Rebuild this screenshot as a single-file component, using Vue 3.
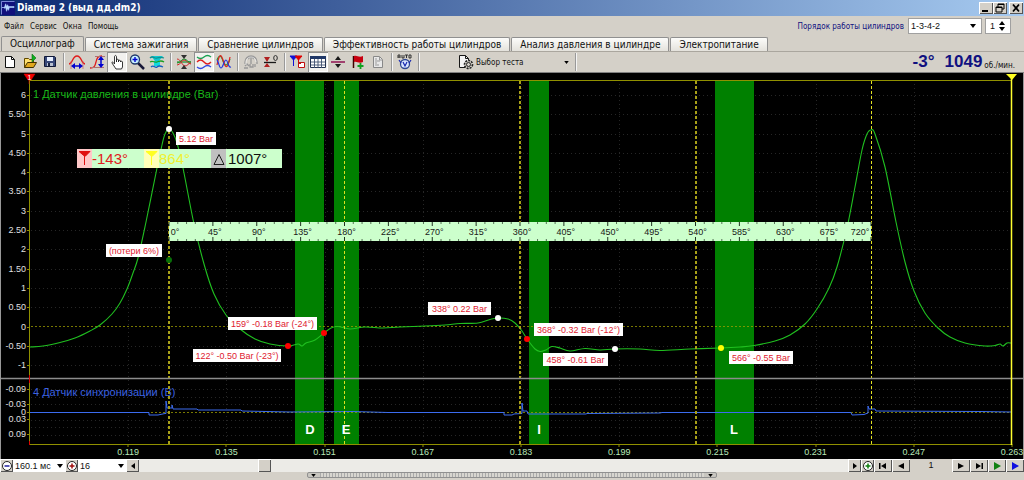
<script setup>
import { ref } from 'vue'

const menus = ['Файл', 'Сервис', 'Окна', 'Помощь']
const tabs = ['Осциллограф', 'Система зажигания', 'Сравнение цилиндров', 'Эффективность работы цилиндров', 'Анализ давления в цилиндре', 'Электропитание']
const activeTab = ref(0)
const order = ref('1-3-4-2')
const cylinder = ref(1)
const span = ref('160.1 мс')
const gain = ref('16')
const position = ref(171)

const X0 = 30
const STEP = 98.2
const times = ['0.119', '0.135', '0.151', '0.167', '0.183', '0.199', '0.215', '0.231', '0.247', '0.263']
const timeX = (i) => X0 + STEP * (i + 1)
const barY = (v) => 326.5 - 38.6 * v
const bars = ['6', '5.50', '5', '4.50', '4', '3.50', '3', '2.50', '2', '1.50', '1', '0.50', '0', '-0.50', '-1']
const volts = [['-0.09', 389], ['-0.03', 404], ['0', 412], ['0.03', 419], ['0.09', 434]]
const voltGrid = [389, 397, 404, 420, 427, 435]

const bands = [
  { x: 295, w: 29, t: 'D', tx: 310 },
  { x: 334, w: 25, t: 'E', tx: 346 },
  { x: 529, w: 20, t: 'I', tx: 539 },
  { x: 715, w: 39, t: 'L', tx: 734 }
]
const cycles = [
  { x: 169, thick: true },
  { x: 344, thick: false },
  { x: 520, thick: true },
  { x: 696, thick: true },
  { x: 871, thick: false }
]

const degX = (d) => 169 + d * 0.975
const ticks = Array.from({ length: 81 }, (_, i) => ({ x: degX(i * 9), big: i % 5 === 0 }))
const degrees = Array.from({ length: 17 }, (_, i) => i * 45)
const degLabelX = (d) => (d === 0 ? 175 : d === 720 ? 860 : degX(d) + 2)

const pressure = [
  [30, 347], [43, 346], [60, 342.5], [75, 338], [90, 331], [100, 325], [112, 314], [120, 303], [127, 289], [133, 273], [138, 258],
  [146, 222], [157, 168], [162, 145], [165, 134], [169, 129], [173, 133], [177, 143], [183, 168], [194, 224], [204, 264], [214, 294], [226, 315],
  [240, 329], [255, 339], [270, 344], [288, 346], [298, 344], [302, 346], [306, 343], [315, 340], [324, 333], [331, 328], [338, 326.5],
  [350, 329], [365, 327], [383, 328], [400, 327], [425, 326], [445, 325], [460, 323.5], [478, 323], [490, 319.5], [498, 318], [508, 319],
  [515, 323], [522, 331], [527, 339], [535, 349], [540, 351.5], [546, 350], [552, 346.5], [560, 348], [570, 351], [585, 348.5],
  [600, 350], [615, 349], [640, 349], [660, 350.5], [690, 349], [721, 348], [740, 347], [754, 345.5], [775, 341], [790, 335],
  [805, 324], [817, 309], [829, 288], [837, 267], [847, 228], [855, 187], [862, 150], [867, 134], [871, 130], [875, 134],
  [885, 167], [896, 222], [905, 262], [914, 291], [925, 313], [938, 328], [950, 337], [965, 343], [985, 346], [995, 345.5],
  [1000, 344], [1003, 346], [1007, 343], [1011, 343]
]
const sync = '30,412.5 149,412.5 149,415 158,415 165,413.5 166,413.5 166,401 167,408 172,408 172,405 173,409 197,409 198,410 241,410 242,411 290,412 352,411.5 388,412.5 504,412.5 504,415 512,415 514,414 522,413.5 522,403 523,411 527,411 528,414 586,414 587,413.5 660,413 662,412.5 851,412.5 852,415 864,414.5 868,413 868,406 869,409 875,409 876,411 980,411.5 1011,412'

function smooth(p) {
  let d = `M${p[0][0]} ${p[0][1]}`
  for (let i = 0; i < p.length - 1; i++) {
    const a = p[i - 1] || p[i]
    const b = p[i]
    const c = p[i + 1]
    const e = p[i + 2] || c
    const n = [b[0] + (c[0] - a[0]) / 6, b[1] + (c[1] - a[1]) / 6, c[0] - (e[0] - b[0]) / 6, c[1] - (e[1] - b[1]) / 6, c[0], c[1]]
    d += 'C' + n.map((v) => v.toFixed(1)).join(' ')
  }
  return d
}
const pressurePath = smooth(pressure)

const points = [
  { x: 169, y: 129, c: '#fff' },
  { x: 169, y: 260, c: '#087008' },
  { x: 288, y: 346, c: '#f00' },
  { x: 324, y: 333, c: '#f00' },
  { x: 498, y: 318, c: '#fff' },
  { x: 527, y: 339, c: '#f00' },
  { x: 615, y: 349, c: '#fff' },
  { x: 721, y: 348, c: '#ff0' }
]
const notes = [
  { x: 176, y: 132, w: 40, t: '5.12 Bar' },
  { x: 106, y: 244, w: 56, t: '(потери 6%)' },
  { x: 228, y: 317, w: 89, t: '159° -0.18 Bar (-24°)' },
  { x: 193, y: 349, w: 88, t: '122° -0.50 Bar (-23°)' },
  { x: 428, y: 302, w: 63, t: '338° 0.22 Bar' },
  { x: 534, y: 323, w: 89, t: '368° -0.32 Bar (-12°)' },
  { x: 543, y: 353, w: 65, t: '458° -0.61 Bar' },
  { x: 729, y: 351, w: 64, t: '566° -0.55 Bar' }
]

const groups = [
  ['new', 'open', 'save'],
  ['period', 'level', 'hand', 'zoom', 'fit'],
  ['cross', 'split', 'overlay'],
  ['auto', 'zero'],
  ['markers', 'table', 'divide', 'flag', 'notes'],
  ['autov']
]
const titles = {
  new: 'Новый', open: 'Открыть', save: 'Сохранить', period: 'Период', level: 'Уровень', hand: 'Рука', zoom: 'Масштаб', fit: 'Вписать',
  cross: 'Центр', split: 'Раздельно', overlay: 'Вместе', auto: 'Авто', zero: 'Ноль', markers: 'Маркеры', table: 'Таблица',
  divide: 'Разделитель', flag: 'Флаг', notes: 'Заметки', autov: 'Авто V'
}
const pressed = ['hand', 'split', 'table']
</script>

<template>
  <main class="app">
    <header class="titlebar">
      <svg class="logo" viewBox="0 0 15 15"><rect width="15" height="15" fill="#10107c" /><path d="M.5 14.500V.500h14" stroke="#8898e0" fill="none" /><path d="M1 7h2l1-1 1-3 1 3 1-2 1 2h6v1H9l-1 3-1-2-1 3-1-4-1 1-1-1H1z" fill="#b8d8ff" stroke="#b8d8ff" stroke-width=".6" /></svg>
      <h1>Diamag 2 (выд дд.dm2)</h1>
      <div class="winbtns">
        <button aria-label="Свернуть"><svg viewBox="0 0 14 12"><path d="M3 9h6" stroke="#000" stroke-width="2" /></svg></button>
        <button aria-label="Восстановить"><svg viewBox="0 0 14 12"><path d="M5 5V2h6v5H9M5 2.500h6M3 5h6v5H3zM3 5.500h6" stroke="#000" fill="none" /></svg></button>
        <button class="close" aria-label="Закрыть"><svg viewBox="0 0 14 12"><path d="M4 2.500l6 7M10 2.500l-6 7" stroke="#000" stroke-width="1.800" /></svg></button>
      </div>
    </header>

    <div class="menurow">
      <nav><button v-for="m in menus" :key="m">{{ m }}</button></nav>
      <label class="orderlabel" for="order">Порядок работы цилиндров</label>
      <div class="drop order">
        <select id="order" v-model="order"><option>1-3-4-2</option><option>1-2-4-3</option></select>
        <svg viewBox="0 0 6 4"><path d="M0 0h6L3 4z" /></svg>
      </div>
      <div class="spin">
        <input v-model="cylinder" type="text" aria-label="Цилиндр">
        <div>
          <button aria-label="Больше" @click="cylinder++"><svg viewBox="0 0 6 4"><path d="M0 4h6L3 0z" /></svg></button>
          <button aria-label="Меньше" @click="cylinder--"><svg viewBox="0 0 6 4"><path d="M0 0h6L3 4z" /></svg></button>
        </div>
      </div>
    </div>

    <div class="tabs" role="tablist">
      <button v-for="(t, i) in tabs" :key="t" role="tab" :aria-selected="i === activeTab" :class="{ on: i === activeTab }" @click="activeTab = i">{{ t }}</button>
    </div>

    <div class="toolbar">
      <template v-for="(g, gi) in groups" :key="gi">
        <button v-for="n in g" :key="n" class="tool" :class="{ on: pressed.includes(n) }" :aria-label="titles[n]">
          <svg viewBox="0 0 18 18" fill="none">
            <template v-if="n === 'new'"><path d="M4.500 3.500h6l3 3v8h-9z" fill="#fff" stroke="#111" /><path d="M10.500 3.500v3h3" stroke="#111" /></template>
            <template v-else-if="n === 'open'"><path d="M3.500 14.500v-9h4l1 1h4v3" fill="#ffe070" stroke="#604800" /><path d="M3.500 14.500l3-5h9l-3 5z" fill="#e0a820" stroke="#403000" /><path d="M11 1v8l4-4z" fill="#10b020" stroke="#087010" stroke-width=".6" /></template>
            <template v-else-if="n === 'save'"><path d="M3.500 3.500h10l1 1v9h-11z" fill="#384878" stroke="#101838" /><path d="M6 4h6v4H6z" fill="#e8f0ff" /><path d="M6 10h6v3H6z" fill="#b8c0d0" /><path d="M7 10h2v3H7z" fill="#182040" /></template>
            <template v-else-if="n === 'period'"><path d="M1 11c4 0 3-8 8-8s4 8 8 8" stroke="#e01818" stroke-width="1.300" /><path d="M3 8v8M15 8v8" stroke="#c86060" stroke-width=".7" /><path d="M5 13h8" stroke="#0000d0" stroke-width="1.500" /><path d="M3 13l4-3v6zM15 13l-4-3v6z" fill="#0000d0" /></template>
            <template v-else-if="n === 'level'"><path d="M2 15c5 0 5-3 6-6s1-6 6-6" stroke="#e01818" stroke-width="1.300" /><path d="M7 3.500h10M3 14.500h13" stroke="#b07070" /><path d="M13 5v8" stroke="#0000d0" stroke-width="1.500" /><path d="M13 3l3 4h-6zM13 15l3-4h-6z" fill="#0000d0" /></template>
            <template v-else-if="n === 'hand'"><path d="M6.500 11V4c0-2 2-2 2 0v5-2c0-1 2-1 2 0v2-1c0-1 2-1 2 0v1c0-1 2-1 2 0v5l-1 2H8l-4-6c0-2 1-1 2.500 1z" fill="#fff" stroke="#202020" stroke-width=".9" /></template>
            <template v-else-if="n === 'zoom'"><path d="M10 10l6 6" stroke="#181838" stroke-width="2.500" /><circle cx="7" cy="6.500" r="4.500" fill="#c8f0ff" stroke="#203868" stroke-width="1.300" /><path d="M4.500 6.500h5M7 4v5" stroke="#0000d0" stroke-width="1.400" /></template>
            <template v-else-if="n === 'fit'"><path d="M3 3h12l-4 5h-4z" fill="#10c8d0" /><path d="M6 8h6v5H6z" fill="#10d8e0" /><path d="M2 5c3-3 4 1 7 0s4-1 7 0" stroke="#109090" stroke-width="1.300" /><path d="M2 9c3-2 4 1 7 0s4-2 7 0" stroke="#18a020" stroke-width="1.300" /><path d="M3 14c3-3 4 2 6 0s4-1 6 0" stroke="#1060c0" stroke-width="1.300" /></template>
            <template v-else-if="n === 'cross'"><path d="M2 9h14" stroke="#189028" stroke-width="1.200" /><path d="M2 6c4 0 5 7 8 7s3-3 6-3M2 12c4 0 4-5 7-5s4 4 7 4" stroke="#d02828" /><path d="M2 10c4 0 4-4 7-4s4 4 7 3" stroke="#189028" /><path d="M9 6L6 2h6zM9 12l-3 4h6z" fill="#303030" /></template>
            <template v-else-if="n === 'split'"><path d="M2 4q3.500 3 7 0t7 0" stroke="#18a050" stroke-width="1.300" /><path d="M2 9q3.500-4 7 0t7 0" stroke="#e02020" stroke-width="1.300" /><path d="M2 14q3.500 3 7 0t7 0" stroke="#3048e0" stroke-width="1.300" /></template>
            <template v-else-if="n === 'overlay'"><path d="M2 7q3-8 6 1t7-2" stroke="#18a030" stroke-width="1.200" /><path d="M2 12C5-4 7 4 9 10s4 5 6-6" stroke="#e02020" stroke-width="1.200" /><path d="M2 7c2 2 2 8 4 8s3-8 5-8 2 8 5 7" stroke="#2038e0" stroke-width="1.200" /></template>
            <template v-else-if="n === 'auto'"><path d="M3 11V9a6 6 0 0112 0v2M9 3v8M6 6l3-3 3 3M3 13l2-2 2 2M8 11v3h3v-3M13 11v3M2 15h4" stroke="#989898" stroke-width="1.300" /><path d="M4 12V9a5 5 0 0110 0" stroke="#fff" stroke-width=".6" /></template>
            <template v-else-if="n === 'zero'"><path d="M2 9.500h12" stroke="#181818" stroke-width="1.300" /><path d="M5 9L2 4h6zM5 10l-3 4h6z" fill="#b02020" /><ellipse cx="13.500" cy="5" rx="1.800" ry="2.500" stroke="#303030" /></template>
            <template v-else-if="n === 'markers'"><path d="M1 3h7L4.500 7zM4.500 6v7" fill="#1010d8" stroke="#1010d8" /><path d="M6 3h7l-3.500 4zM9.500 6v3" fill="#e00000" stroke="#e00000" /><path d="M9.500 9.500h6v5h-6z" fill="#fff" stroke="#c01010" /><path d="M9 9h3v2H9z" fill="#c01010" /></template>
            <template v-else-if="n === 'table'"><path d="M1.500 3.500h15v11h-15z" fill="#fff" stroke="#203050" /><path d="M1 3h16v3H1z" fill="#203868" /><path d="M5.500 6v9M9 6v9M12.500 6v9M2 9h14M2 12h14" stroke="#405070" stroke-width=".9" /></template>
            <template v-else-if="n === 'divide'"><path d="M2 9h14" stroke="#901050" stroke-width="1.500" /><path d="M9 3l3 4H6zM9 15l3-4H6z" fill="#181818" /></template>
            <template v-else-if="n === 'flag'"><path d="M4.500 3v12" stroke="#400000" stroke-width="1.500" /><path d="M5 3c3-1 5 2 9 0v6c-4 2-6-1-9 0z" fill="#c80010" /><path d="M11.500 10v6M8.500 13h6" stroke="#10a020" stroke-width="1.800" /></template>
            <template v-else-if="n === 'notes'"><path d="M4.500 3.500h6l3 3v8h-9z" fill="#e8e8e8" stroke="#888" /><path d="M6 6h2M6 8h5M6 10h2M6 12h4M10.500 4v3h3" stroke="#999" /></template>
            <template v-else><path d="M2 5V2h2v3M2 4h2M6 2v3h2V2M9 2h3M10.500 2v3M13 2h2v3h-2z" stroke="#222" stroke-width=".9" /><circle cx="9" cy="11" r="4.500" fill="#d8e4ff" stroke="#304890" stroke-width="1.300" /><path d="M3 7l2 3M15 7l-2 3M7 9l2 4 2-4" stroke="#1828b0" stroke-width="1.200" /></template>
          </svg>
        </button>
        <i class="sep" />
      </template>
      <button class="test">
        <svg class="testicon" viewBox="0 0 16 16" fill="none"><path d="M7 13.500H1.500v-12h6l3 3V6" fill="#f4f4f4" stroke="#181818" /><path d="M7.500 1.500v3h3" stroke="#181818" /><circle cx="10.500" cy="10.500" r="4" fill="#d4d0c8" stroke="#222" stroke-width="1.600" stroke-dasharray="2 1" /><circle cx="10.500" cy="10.500" r="2" stroke="#222" /></svg>
        <span>Выбор теста</span>
        <svg class="arrow" viewBox="0 0 6 4"><path d="M0 0h6L3 4z" /></svg>
      </button>
      <i class="sep" />
      <output class="angle">-3°</output>
      <output class="rpm">1049</output>
      <span class="unit">об./мин.</span>
    </div>

    <svg class="scope" viewBox="0 73 1024 386" role="img" aria-label="Осциллограмма">
      <rect y="73" width="1024" height="386" fill="#000" />
      <g class="grid">
        <template v-for="(b, i) in bars" :key="b"><path v-if="b !== '0'" :d="`M31 ${Math.round(barY(6 - i * 0.5)) + 0.5}H1011`" /></template>
        <path v-for="y in voltGrid" :key="y" :d="`M31 ${y + 0.5}H1011`" />
        <path v-for="(t, i) in times.slice(0, 9)" :key="t" :d="`M${Math.round(timeX(i)) + 0.5} 84V444`" />
      </g>
      <rect v-for="b in bands" :key="b.t" :x="b.x" y="80" :width="b.w" height="364" fill="#008000" />
      <path d="M31 326.500H1011M31 412.500H1011" stroke="#a0a000" stroke-dasharray="2 2" opacity=".75" />
      <path :d="pressurePath" fill="none" stroke="#20c020" stroke-width="1.100" />
      <polyline :points="sync" fill="none" stroke="#3c6cf0" />

      <text x="33" y="98" class="chan" fill="#18b818">1 Датчик давления в цилиндре (Bar)</text>
      <text x="33" y="396" class="chan" fill="#3c62e0">4 Датчик синхронизации (В)</text>
      <g class="cycle"><path v-for="c in cycles" :key="c.x" :class="{ thick: c.thick }" :d="c.thick ? `M${c.x} 81V444` : `M${c.x + 0.5} 81V444`" /></g>
      <path d="M0 378.500H1024" stroke="#8c8c8c" stroke-width="1.500" />
      <path d="M29.500 80.500H1011M29.500 80V444M29 444.500H1012" stroke="#909000" fill="none" />
      <g class="marks">
        <path v-for="(b, i) in bars" :key="b" :d="`M27 ${Math.round(barY(6 - i * 0.5)) + 0.5}h3`" />
        <path v-for="v in volts" :key="v[0]" :d="`M27 ${v[1] + 0.5}h3`" />
        <path v-for="(t, i) in times" :key="t" :d="`M${Math.round(timeX(i))} 444v3`" />
      </g>
      <path d="M29.500 375v8M29.500 441v4" stroke="#d00" />
      <path d="M1011.500 76V445" stroke="#ffff30" stroke-width="1.500" />
      <path d="M1006 74h11l-5 6z" fill="#ffff20" />
      <path d="M24 74h11l-4 6h-3zM29 78v6" fill="#e00" stroke="#e00" stroke-width=".5" />
      <text x="29.500" y="80" class="mini">1</text>
      <path d="M1023.500 73V459M.500 73V459" stroke="#999" />

      <g class="axis">
        <text v-for="(b, i) in bars" :key="b" x="26" :y="barY(6 - i * 0.5) + 3">{{ b }}</text>
        <text v-for="v in volts" :key="v[0]" x="26" :y="v[1] + 3">{{ v[0] }}</text>
      </g>
      <g class="time"><text v-for="(t, i) in times" :key="t" :x="timeX(i)" y="455">{{ t }}</text></g>
      <text v-for="b in bands" :key="b.t" :x="b.tx" y="434" class="band">{{ b.t }}</text>

      <circle v-for="(p, i) in points" :key="i" :cx="p.x" :cy="p.y" r="3" :fill="p.c" />
      <g v-for="n in notes" :key="n.t">
        <rect :x="n.x" :y="n.y" :width="n.w" height="13" fill="#fff" />
        <text :x="n.x + n.w / 2" :y="n.y + 10" class="note">{{ n.t }}</text>
      </g>

      <rect x="169" y="222" width="702" height="19" fill="#ccffcc" />
      <g stroke="#203020">
        <path v-for="k in ticks" :key="k.x" :d="`M${k.x} 222v${k.big ? 4 : 2}M${k.x} 241v${k.big ? -4 : -2}`" :stroke-width="k.big ? 1 : 0.7" />
      </g>
      <g class="deg"><text v-for="d in degrees" :key="d" :x="degLabelX(d)" y="235">{{ d }}°</text></g>

      <rect x="77" y="149" width="205" height="19" fill="#ccffcc" />
      <rect x="77" y="149" width="15" height="19" fill="#ffc8c8" />
      <rect x="144" y="149" width="15" height="19" fill="#ffffb8" />
      <rect x="211" y="149" width="15" height="19" fill="#c0c0c0" />
      <path d="M79 151.500h11l-5 5zM84.500 155v10" fill="#e01010" stroke="#e01010" />
      <path d="M146 151.500h11l-5 5zM151.500 155v10" fill="#ffff20" stroke="#ffff20" />
      <path d="M214 164.500h10l-5-10z" fill="none" stroke="#202020" />
      <g class="meas">
        <text x="92" y="164" fill="#e02020">-143°</text>
        <text x="159" y="164" fill="#f0f030">864°</text>
        <text x="228" y="164" fill="#101010">1007°</text>
      </g>
    </svg>

    <footer class="bottom">
      <button class="b13" aria-label="Сжать"><svg viewBox="0 0 12 12"><circle cx="6" cy="6" r="4.500" fill="#fff" stroke="#222" /><path d="M3.500 6h5" stroke="#2020a0" stroke-width="1.500" /></svg></button>
      <div class="drop span"><select v-model="span" aria-label="Развёртка"><option>160.1 мс</option></select><svg viewBox="0 0 6 4"><path d="M0 0h6L3 4z" /></svg></div>
      <button class="b13" aria-label="Растянуть"><svg viewBox="0 0 12 12"><circle cx="6" cy="6" r="4.500" fill="#fff" stroke="#222" /><path d="M3.500 6h5M6 3.500v5" stroke="#a01010" stroke-width="1.500" /></svg></button>
      <div class="drop gain"><select v-model="gain" aria-label="Масштаб"><option>16</option></select><svg viewBox="0 0 6 4"><path d="M0 0h6L3 4z" /></svg></div>
      <button class="b13" aria-label="Влево"><svg viewBox="0 0 12 12"><path d="M8 3v6L4 6z" /></svg></button>
      <input v-model="position" class="scroll" type="range" min="0" max="1000" aria-label="Прокрутка">
      <button class="b13" aria-label="Вправо"><svg viewBox="0 0 12 12"><path d="M4 3v6l4-3z" /></svg></button>
      <button class="b13" aria-label="Увеличить"><svg viewBox="0 0 12 12"><circle cx="6" cy="6" r="4.500" fill="#fff" stroke="#222" /><path d="M3.500 6h5M6 3.500v5" stroke="#108010" stroke-width="1.500" /></svg></button>
      <button class="b18" aria-label="В начало"><svg viewBox="0 0 12 12"><path d="M2 3v6h1.500V3zM9 3v6L4 6z" /></svg></button>
      <button class="b18" aria-label="Назад"><svg viewBox="0 0 12 12"><path d="M9 3v6L3 6z" /></svg></button>
      <span class="page">1</span>
      <button class="b18" aria-label="Вперёд"><svg viewBox="0 0 12 12"><path d="M3 3v6l6-3z" /></svg></button>
      <button class="b18" aria-label="В конец"><svg viewBox="0 0 12 12"><path d="M8.500 3v6H10V3zM3 3v6l5-3z" /></svg></button>
      <button class="b18" aria-label="Пуск"><svg viewBox="0 0 12 12"><path d="M3 2v8l7-4z" fill="#108010" /></svg></button>
      <button class="b18" aria-label="Запись"><svg viewBox="0 0 12 12"><path d="M3 2v8l7-4z" fill="#1010e0" /></svg></button>
    </footer>
    <div class="splitrow">
      <button class="splitter" aria-label="Панель"><svg viewBox="0 0 6 4"><path d="M0 0h6L3 4z" /></svg><i /><svg viewBox="0 0 6 4"><path d="M0 0h6L3 4z" /></svg></button>
    </div>
  </main>
</template>

<style>
body { margin: 0; background: #d4d0c8; }
</style>

<style scoped>
.app { font-family: "DejaVu Sans Condensed", "DejaVu Sans", sans-serif; font-size: 8px; color: #111; background: #d4d0c8; }
button, select, input { font: inherit; color: inherit; margin: 0; padding: 0; border: 0; background: none; border-radius: 0; }
svg { display: block; }

.titlebar { height: 16px; display: flex; align-items: center; padding: 0 1px; background: linear-gradient(90deg, #0c2a72, #a6caf0); }
.logo { width: 14px; height: 14px; }
h1 { flex: 1; margin: 0 0 0 2px; font-size: 10px; line-height: 16px; color: #fff; }
.winbtns { display: flex; }
.winbtns button { width: 14px; height: 12px; background: #d4d0c8; box-shadow: inset 1px 1px #fff, inset -1px -1px #555; }
.winbtns .close { margin-left: 2px; }
.winbtns svg { width: 14px; height: 12px; }

.menurow { height: 20px; display: flex; align-items: center; padding: 0 13px 0 4px; }
nav { flex: 1; display: flex; gap: 6px; }
.orderlabel { color: #101080; margin-right: 4px; }
.drop { position: relative; background: #fff; }
.drop select { appearance: none; display: block; width: 100%; height: 100%; padding-left: 2px; font: 9px "Liberation Sans", sans-serif; }
.drop svg { position: absolute; right: 5px; top: 50%; margin-top: -2px; width: 6px; height: 4px; pointer-events: none; }
.order { width: 72px; height: 14px; border: 1px solid #a0a0a0; margin-right: 3px; }
.spin { display: flex; width: 24px; height: 14px; background: #fff; border: 1px solid #a0a0a0; }
.spin input { width: 13px; padding-left: 4px; box-sizing: border-box; font: 9px "Liberation Sans", sans-serif; }
.spin div { display: flex; flex-direction: column; justify-content: center; gap: 2px; }
.spin svg { width: 6px; height: 4px; }

.tabs { height: 15px; display: flex; align-items: flex-end; gap: 1px; padding-left: 1px; }
.tabs button { height: 14px; padding: 0 8px; font-size: 10px; line-height: 14px; white-space: nowrap; background: linear-gradient(#fcfcfa, #e4e2dc); border: 1px solid #909090; border-bottom: 0; border-radius: 2px 2px 0 0; box-sizing: border-box; }
.tabs .on { height: 15px; background: #d8d4cc; }

.toolbar { height: 20px; display: flex; align-items: center; border-top: 1px solid #aaa69e; border-bottom: 1px solid #808080; }
.tool { width: 20px; height: 20px; flex: none; display: grid; place-items: center; }
.tool.on { background: #f2f1ee; box-shadow: inset 1px 1px #909090, inset -1px -1px #fff; }
.tool svg { width: 18px; height: 18px; }
.sep { flex: none; width: 1px; height: 18px; margin: 0 3px; background: #999; box-shadow: 1px 0 #f4f4f4; }
.test { display: flex; align-items: center; width: 150px; padding-left: 36px; box-sizing: border-box; }
.testicon { width: 16px; height: 16px; }
.test span { flex: 1; text-align: left; margin-left: 2px; }
.arrow { width: 5px; height: 3px; margin-right: 3px; }
.angle, .rpm { font: bold 17px/18px "Liberation Sans", sans-serif; color: #101080; }
.angle { margin-left: auto; margin-right: 10px; }
.unit { align-self: flex-end; padding-bottom: 2px; margin: 0 9px 0 2px; }

.scope { width: 100%; height: auto; font-family: "Liberation Sans", sans-serif; }
.grid path { stroke: #262626; stroke-dasharray: 1 3; }
.cycle path { stroke: #e0e020; stroke-dasharray: 3 2; shape-rendering: crispEdges; }
.cycle .thick { stroke: #a8a018; stroke-width: 2px; }
.marks path { stroke: #909000; }
.axis text { font-size: 9px; fill: #e0e0e0; text-anchor: end; }
.time text { font-size: 9px; fill: #b8e8b8; text-anchor: middle; }
.chan { font-size: 11px; }
.mini { font-size: 7px; fill: #fff; text-anchor: middle; }
.band { font: bold 13px "Liberation Sans", sans-serif; fill: #fff; text-anchor: middle; }
.note { font-size: 9px; fill: #e02030; text-anchor: middle; }
.deg text { font-size: 9px; fill: #182018; text-anchor: middle; }
.meas text { font-size: 15px; }

.bottom { display: flex; height: 13px; background: #d4d0c8; }
.bottom button { background: #d4d0c8; box-shadow: inset 1px 1px #fff, inset -1px -1px #555; display: grid; place-items: center; }
.bottom button svg { width: 12px; height: 12px; }
.b13 { width: 13px; flex: none; }
.b18 { width: 18px; flex: none; }
.span { width: 52px; }
.gain { width: 48px; }
.drop.span svg, .drop.gain svg { right: 2px; }
.scroll { flex: 1; min-width: 0; appearance: none; height: 13px; background: #ecebe7; }
.scroll::-webkit-slider-thumb { appearance: none; width: 13px; height: 13px; background: #d4d0c8; box-shadow: inset 1px 1px #fff, inset -1px -1px #555; }
.page { width: 42px; text-align: center; font: 9px/13px "Liberation Sans", sans-serif; }
.splitrow { height: 8px; }
.splitter { display: flex; align-items: center; width: 40%; height: 6px; margin: 0 auto; padding: 0 3px; box-sizing: border-box; border: 1px solid #909090; border-radius: 2px; background: #c8c6c0; }
.splitter i { flex: 1; height: 4px; margin: 0 4px; background: repeating-linear-gradient(90deg, #aaa 0 1px, #d8d6d0 1px 3px); }
.splitter svg { width: 5px; height: 3px; }
</style>
